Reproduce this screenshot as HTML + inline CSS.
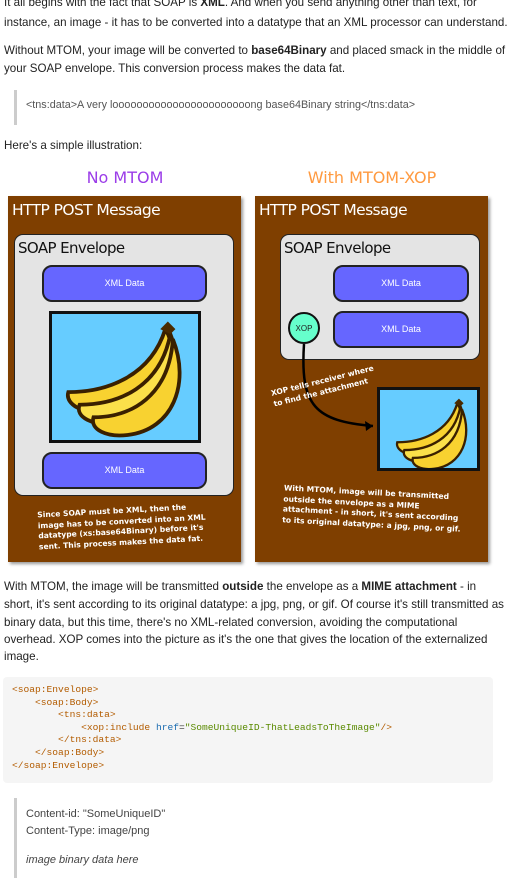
<!DOCTYPE html>
<html><head><meta charset="utf-8"><style>
*{margin:0;padding:0;box-sizing:border-box}
body{width:510px;height:866px;overflow:hidden;background:#fff;font-family:"Liberation Sans",sans-serif;color:#222;position:relative}
.t{position:absolute;left:4px;font-size:11.6px;line-height:17.6px;white-space:nowrap}
.bq{position:absolute;left:14px;border-left:3px solid #ccc;color:#555}
.box{position:absolute;background:#7f3f00;box-shadow:2px 2px 3px #999}
.hd{position:absolute;color:#fff;font-size:15.5px;font-family:"DejaVu Sans",sans-serif;letter-spacing:-0.6px}
.env{position:absolute;background:#e4e4e4;border:1.5px solid #222;border-radius:9px}
.et{position:absolute;font-size:15px;font-family:"DejaVu Sans",sans-serif;color:#111;letter-spacing:-0.6px}
.xd{position:absolute;background:#6666ff;border:2px solid #222;border-radius:10px;color:#fff;font-size:9px;text-align:center}
.img{position:absolute;background:#66ccff;border:3px solid #111}
.cap{position:absolute;color:#fff;font-size:7.6px;font-family:"DejaVu Sans",sans-serif;font-weight:bold;line-height:10.5px;transform:rotate(-3deg);white-space:nowrap}
.code{position:absolute;left:3px;top:677px;width:490px;height:106px;background:#f5f5f5;border-radius:4px;font-family:"Liberation Mono",monospace;font-size:9.6px;line-height:12.6px;padding:7px 9px;white-space:pre;color:#b35c00}
.g{color:#5a8a00}.b{color:#1a6bb0}.k{color:#333}
</style></head><body>
<div class="t" style="top:-6px">It all begins with the fact that SOAP is <b>XML</b>. And when you send anything other than text, for</div>
<div class="t" style="top:14px">instance, an image - it has to be converted into a datatype that an XML processor can understand.</div>
<div class="t" style="top:42px">Without MTOM, your image will be converted to <b>base64Binary</b> and placed smack in the middle of</div>
<div class="t" style="top:60px">your SOAP envelope. This conversion process makes the data fat.</div>
<div class="bq" style="top:90px;height:35px;width:480px"><div style="position:absolute;left:9px;top:9px;font-size:10.8px;white-space:nowrap">&lt;tns:data&gt;A very looooooooooooooooooooooong base64Binary string&lt;/tns:data&gt;</div></div>
<div class="t" style="top:137px">Here's a simple illustration:</div>

<div style="position:absolute;left:0;width:250px;top:168px;text-align:center;color:#9b3de8;font-size:16px;font-family:'DejaVu Sans',sans-serif">No MTOM</div>
<div style="position:absolute;left:250px;width:244px;top:168px;text-align:center;color:#ff9a40;font-size:16px;font-family:'DejaVu Sans',sans-serif">With MTOM-XOP</div>

<svg width="0" height="0" style="position:absolute"><defs>
<g id="ban">
<path d="M5 62 C35 62 70 50 82 12 C96 35 85 72 35 78 C18 80 2 72 5 62Z" fill="#f8d230" stroke="#3a2000" stroke-width="3"/>
<path d="M14 72 C45 72 78 58 86 16 C98 45 85 82 42 87 C25 89 10 82 14 72Z" fill="#fbe04a" stroke="#3a2000" stroke-width="3"/>
<path d="M25 82 C55 82 85 65 88 20 C102 55 88 92 52 96 C36 98 22 92 25 82Z" fill="#f8d230" stroke="#3a2000" stroke-width="3"/>
<path d="M78 12 L84 6 L90 12 L86 16Z" fill="#4a2a00"/>
</g></defs></svg>

<div class="box" style="left:8px;top:196px;width:233px;height:366px">
<div class="hd" style="left:4px;top:5px">HTTP POST Message</div>
<div class="env" style="left:6px;top:38px;width:220px;height:262px">
<div class="et" style="left:3px;top:4px">SOAP Envelope</div>
<div class="xd" style="left:27px;top:30px;width:165px;height:37px;line-height:33px">XML Data</div>
<div class="img" style="left:34px;top:76px;width:152px;height:132px"><svg width="146" height="126" viewBox="0 0 110 100"><use href="#ban" transform="translate(5,0)"/></svg></div>
<div class="xd" style="left:27px;top:217px;width:165px;height:37px;line-height:33px">XML Data</div>
</div>
<div class="cap" style="left:30px;top:310px">Since SOAP must be XML, then the<br>image has to be converted into an XML<br>datatype (xs:base64Binary) before it's<br>sent. This process makes the data fat.</div>
</div>

<div class="box" style="left:255px;top:196px;width:233px;height:366px">
<div class="hd" style="left:4px;top:5px">HTTP POST Message</div>
<div class="env" style="left:25px;top:38px;width:200px;height:126px">
<div class="et" style="left:3px;top:4px">SOAP Envelope</div>
<div class="xd" style="left:52px;top:30px;width:136px;height:37px;line-height:33px">XML Data</div>
<div class="xd" style="left:52px;top:76px;width:136px;height:37px;line-height:33px">XML Data</div>
</div>
<svg style="position:absolute;left:0;top:0" width="233" height="366">
<path d="M49 148 C45 210 60 225 118 230" fill="none" stroke="#000" stroke-width="2.5"/>
<path d="M118 230 L110 225 L111 235Z" fill="#000"/>
<circle cx="49" cy="132" r="15" fill="#66ffcc" stroke="#111" stroke-width="2"/>
<text x="49" y="135" font-size="8" text-anchor="middle" fill="#222" font-family="Liberation Sans">XOP</text>
</svg>
<div class="cap" style="left:16px;top:180px;transform:rotate(-14deg)">XOP tells receiver where<br>to find the attachment</div>
<div class="img" style="left:122px;top:191px;width:103px;height:84px"><svg width="97" height="78" viewBox="0 0 110 100"><use href="#ban" transform="translate(10,5)"/></svg></div>
<div class="cap" style="left:28px;top:292px;transform:rotate(3deg)">With MTOM, image will be transmitted<br>outside the envelope as a MIME<br>attachment - in short, it's sent according<br>to its original datatype: a jpg, png, or gif.</div>
</div>

<div class="t" style="top:578px">With MTOM, the image will be transmitted <b>outside</b> the envelope as a <b>MIME attachment</b> - in</div>
<div class="t" style="top:596px">short, it's sent according to its original datatype: a jpg, png, or gif. Of course it's still transmitted as</div>
<div class="t" style="top:614px">binary data, but this time, there's no XML-related conversion, avoiding the computational</div>
<div class="t" style="top:631px">overhead. XOP comes into the picture as it's the one that gives the location of the externalized</div>
<div class="t" style="top:648px">image.</div>

<div class="code">&lt;soap:Envelope&gt;
    &lt;soap:Body&gt;
        &lt;tns:data&gt;
            &lt;xop:include <span class="b">href</span><span class="k">=</span><span class="g">"SomeUniqueID-ThatLeadsToTheImage"</span>/&gt;
        &lt;/tns:data&gt;
    &lt;/soap:Body&gt;
&lt;/soap:Envelope&gt;</div>

<div class="bq" style="top:798px;height:80px;width:480px;color:#444;font-size:11px">
<div style="position:absolute;left:9px;top:10px;white-space:nowrap">Content-id: "SomeUniqueID"</div>
<div style="position:absolute;left:9px;top:27px;white-space:nowrap">Content-Type: image/png</div>
<div style="position:absolute;left:9px;top:56px;white-space:nowrap;font-style:italic">image binary data here</div>
</div>
</body></html>
